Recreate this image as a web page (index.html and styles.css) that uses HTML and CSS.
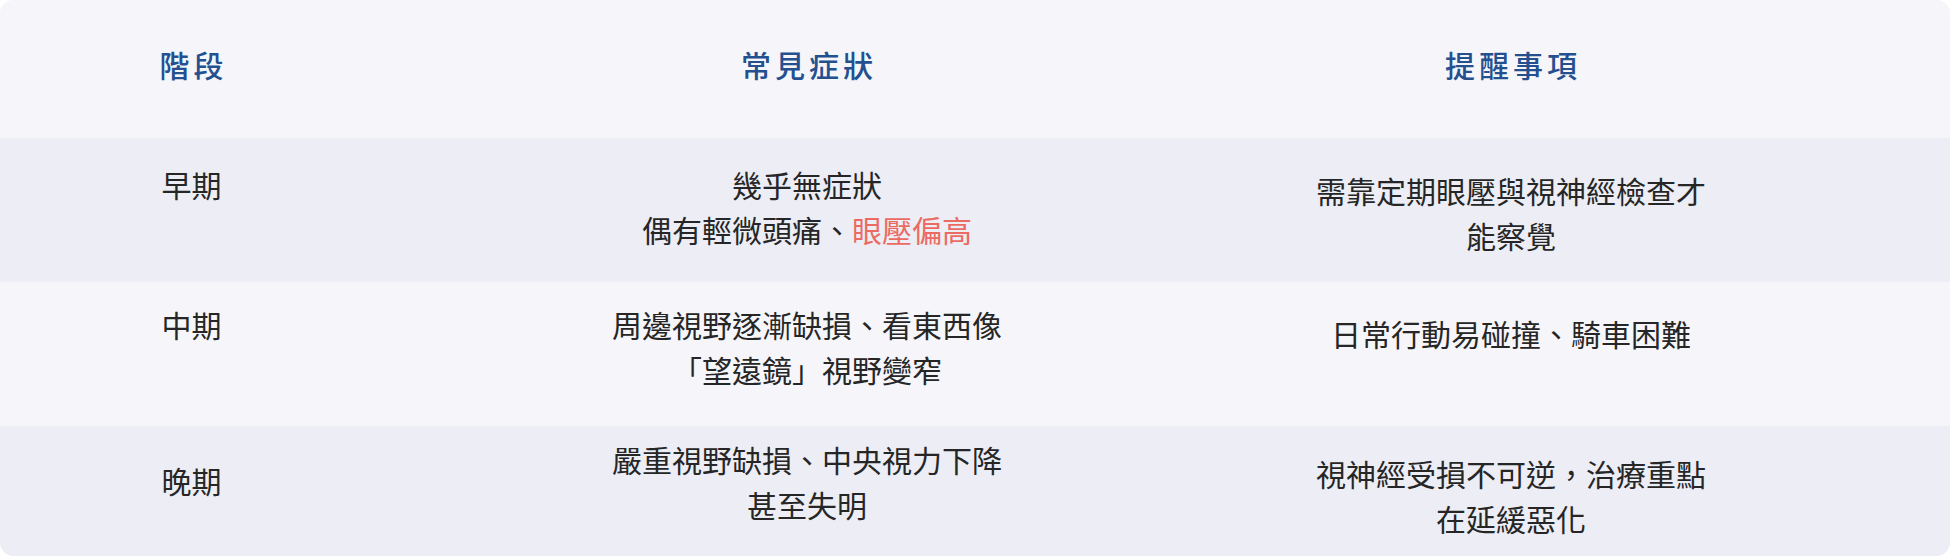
FILE: index.html
```html
<!DOCTYPE html>
<html lang="zh-Hant">
<head>
<meta charset="utf-8">
<title>青光眼分期</title>
<link rel="stylesheet" href="styles.css">
</head>
<body>
<div class="table">
  <div class="row row--head">
    <div class="cell">階段</div>
    <div class="cell">常見症狀</div>
    <div class="cell cell--last">提醒事項</div>
  </div>
  <div class="row row--alt">
    <div class="cell pt-24">早期</div>
    <div class="cell pt-24">幾乎無症狀<br>偶有輕微頭痛、<span class="warn">眼壓偏高</span></div>
    <div class="cell cell--last pt-30">需靠定期眼壓與視神經檢查才<br>能察覺</div>
  </div>
  <div class="row">
    <div class="cell pt-20">中期</div>
    <div class="cell pt-20">周邊視野逐漸缺損、看東西像<br>「望遠鏡」視野變窄</div>
    <div class="cell cell--last pt-29">日常行動易碰撞、騎車困難</div>
  </div>
  <div class="row row--alt row--end">
    <div class="cell pt-32">晚期</div>
    <div class="cell pt-11">嚴重視野缺損、中央視力下降<br>甚至失明</div>
    <div class="cell cell--last pt-25">視神經受損不可逆，治療重點<br>在延緩惡化</div>
  </div>
</div>
</body>
</html>
```

FILE: styles.css
```css
html, body {
  margin: 0;
  padding: 0;
  background: #ffffff;
}

body {
  font-family: "Noto Sans CJK TC", "Noto Sans CJK SC", "Noto Sans", sans-serif;
  color: #262626;
}

.table {
  width: 1950px;
  height: 556px;
  border-radius: 14px;
  overflow: hidden;
  background: #f5f5fa;
}

.row {
  display: grid;
  grid-template-columns: 383px 848px 1fr;
  height: 144px;
  box-sizing: border-box;
  background: #f5f5fa;
}

.row--alt {
  background: #ecedf5;
}

.row--head {
  height: 138px;
}

.row--end {
  height: 130px;
}

.cell {
  font-size: 30px;
  line-height: 45px;
  text-align: center;
  box-sizing: border-box;
}

.cell--last {
  padding-right: 159px;
}

.row--head .cell {
  padding-top: 42px;
  color: #24508f;
  font-weight: 500;
  letter-spacing: 4px;
  text-indent: 4px;
}

.warn {
  color: #eb6b63;
}

.pt-11 { padding-top: 11px; }
.pt-20 { padding-top: 20px; }
.pt-24 { padding-top: 24px; }
.pt-25 { padding-top: 25px; }
.pt-29 { padding-top: 29px; }
.pt-30 { padding-top: 30px; }
.pt-32 { padding-top: 32px; }
```
